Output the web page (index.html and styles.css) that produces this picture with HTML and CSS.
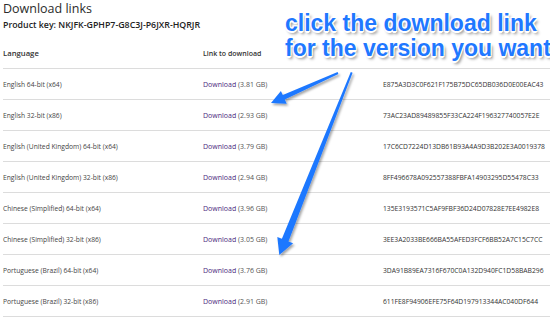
FILE: index.html
```html
<!DOCTYPE html>
<html>
<head>
<meta charset="utf-8">
<link rel="stylesheet" href="styles.css">
</head>
<body>
<div class="page">
  <h1 class="title">Download links</h1>
  <p class="key">Product key: NKJFK-GPHP7-G8C3J-P6JXR-HQRJR</p>
  <div class="table">
    <div class="row head">
      <div class="c1">Language</div>
      <div class="c2">Link to download</div>
      <div class="c3"></div>
    </div>
    <div class="row"><div class="c1">English 64-bit (x64)</div><div class="c2"><a class="dl">Download</a> <span class="size">(3.81 GB)</span></div><div class="c3">E875A3D3C0F621F175B75DC65DB036D0E00EAC43</div></div>
    <div class="row"><div class="c1">English 32-bit (x86)</div><div class="c2"><a class="dl">Download</a> <span class="size">(2.93 GB)</span></div><div class="c3">73AC23AD89489855F33CA224F196327740057E2E</div></div>
    <div class="row"><div class="c1">English (United Kingdom) 64-bit (x64)</div><div class="c2"><a class="dl">Download</a> <span class="size">(3.79 GB)</span></div><div class="c3">17C6CD7224D13DB61B93A4A9D3B202E3A0019378</div></div>
    <div class="row"><div class="c1">English (United Kingdom) 32-bit (x86)</div><div class="c2"><a class="dl">Download</a> <span class="size">(2.94 GB)</span></div><div class="c3">8FF496678A092557388FBFA14903295D55478C33</div></div>
    <div class="row"><div class="c1">Chinese (Simplified) 64-bit (x64)</div><div class="c2"><a class="dl">Download</a> <span class="size">(3.96 GB)</span></div><div class="c3">135E3193571C5AF9FBF36D24D07828E7EE4982E8</div></div>
    <div class="row"><div class="c1">Chinese (Simplified) 32-bit (x86)</div><div class="c2"><a class="dl">Download</a> <span class="size">(3.05 GB)</span></div><div class="c3">3EE3A2033BE666BA55AFED3FCF6BB52A7C15C7CC</div></div>
    <div class="row"><div class="c1">Portuguese (Brazil) 64-bit (x64)</div><div class="c2"><a class="dl">Download</a> <span class="size">(3.76 GB)</span></div><div class="c3">3DA91B89EA7316F670C0A132D940FC1D58BAB296</div></div>
    <div class="row"><div class="c1">Portuguese (Brazil) 32-bit (x86)</div><div class="c2"><a class="dl">Download</a> <span class="size">(2.91 GB)</span></div><div class="c3">611FE8F94906EFE75F64D197913344AC040DF644</div></div>
  </div>
</div>
<div class="callout">click the download link<br>for the version you want</div>
<svg class="arrows" width="550" height="324" viewBox="0 0 550 324">
  <defs>
    <filter id="sh" x="-20%" y="-20%" width="140%" height="140%">
      <feDropShadow dx="1.5" dy="2" stdDeviation="1.2" flood-color="#000" flood-opacity="0.35"/>
    </filter>
  </defs>
  <polygon filter="url(#sh)" fill="#1f78ff" points="337.6,72.1 282.8,95.0 280.9,90.9 271,103 286.7,103.7 284.8,99.6 338.4,73.9"/>
  <polygon filter="url(#sh)" fill="#1f78ff" points="350.8,71.9 281.9,238.8 277.3,237.0 279.3,255 293.1,243.2 288.5,241.4 352.6,72.7"/>
</svg>
</body>
</html>
```
FILE: styles.css
```css
html, body {
  margin: 0;
  padding: 0;
  background: #fff;
  width: 550px;
  height: 324px;
  overflow: hidden;
}
body {
  position: relative;
  font-family: "Open Sans", "Noto Sans", sans-serif;
  color: #333;
}
.page {
  padding-left: 3px;
}
.title {
  margin: 0;
  font-size: 12.5px;
  line-height: 18px;
  font-weight: 400;
  color: #2b2b2b;
}
.key {
  margin: 0;
  font-size: 8.8px;
  line-height: 14px;
  font-weight: 600;
  color: #222;
}
.table {
  margin-top: 6px;
}
.row {
  display: grid;
  grid-template-columns: 200px 180px 1fr;
  align-items: center;
  height: 30px;
  border-bottom: 1px solid #dcdcdc;
  font-size: 6.7px;
  color: #444;
}
.row.head {
  font-size: 7.7px;
  font-weight: 600;
  color: #333;
}
.c2 {
  font-size: 7px;
}
.dl {
  color: #4a2a7e;
}
.size {
  color: #555;
}
.c3 {
  font-size: 6.75px;
  color: #333;
}
.callout {
  position: absolute;
  left: 285px;
  top: 11px;
  font-family: "Liberation Sans", Arial, sans-serif;
  font-weight: 700;
  font-size: 23px;
  line-height: 25px;
  white-space: nowrap;
  color: #1f78ff;
  text-shadow: -1px -1px 0 #fff, 1px -1px 0 #fff, -1px 1px 0 #fff, 1px 1px 0 #fff, 0 -1.5px 0 #fff, 0 1.5px 0 #fff, 2px 3px 3px rgba(0, 0, 0, 0.45);
}
.arrows {
  position: absolute;
  left: 0;
  top: 0;
  pointer-events: none;
}
```
